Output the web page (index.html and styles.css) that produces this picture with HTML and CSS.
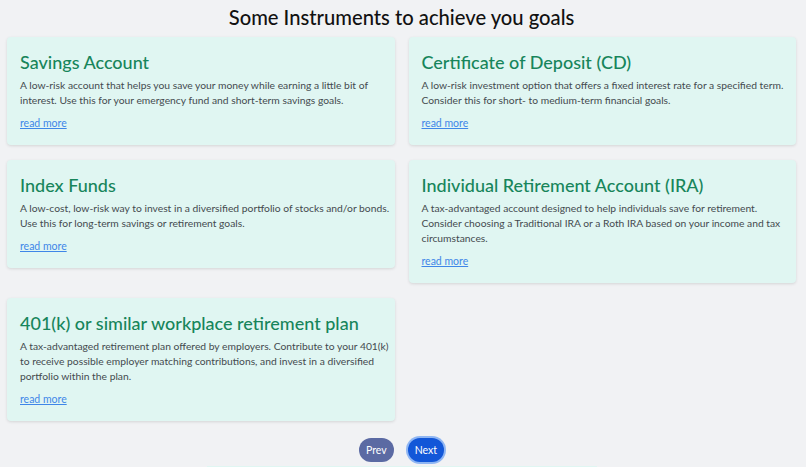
FILE: index.html
```html
<!DOCTYPE html>
<html>
<head>
<meta charset="utf-8">
<link rel="stylesheet" href="styles.css">
</head>
<body>
<main class="page">
  <h1 class="page-title">Some Instruments to achieve you goals</h1>
  <section class="grid">
    <article class="card">
      <h2 class="card-title">Savings Account</h2>
      <p class="card-text">A low-risk account that helps you save your money while earning a little bit of<br>interest. Use this for your emergency fund and short-term savings goals.</p>
      <a class="card-link" href="#">read more</a>
    </article>
    <article class="card">
      <h2 class="card-title">Certificate of Deposit (CD)</h2>
      <p class="card-text">A low-risk investment option that offers a fixed interest rate for a specified term.<br>Consider this for short- to medium-term financial goals.</p>
      <a class="card-link" href="#">read more</a>
    </article>
    <article class="card">
      <h2 class="card-title">Index Funds</h2>
      <p class="card-text">A low-cost, low-risk way to invest in a diversified portfolio of stocks and/or bonds.<br>Use this for long-term savings or retirement goals.</p>
      <a class="card-link" href="#">read more</a>
    </article>
    <article class="card">
      <h2 class="card-title">Individual Retirement Account (IRA)</h2>
      <p class="card-text">A tax-advantaged account designed to help individuals save for retirement.<br>Consider choosing a Traditional IRA or a Roth IRA based on your income and tax<br>circumstances.</p>
      <a class="card-link" href="#">read more</a>
    </article>
    <article class="card">
      <h2 class="card-title">401(k) or similar workplace retirement plan</h2>
      <p class="card-text">A tax-advantaged retirement plan offered by employers. Contribute to your 401(k)<br>to receive possible employer matching contributions, and invest in a diversified<br>portfolio within the plan.</p>
      <a class="card-link" href="#">read more</a>
    </article>
  </section>
  <nav class="pager">
    <button class="btn btn-prev">Prev</button>
    <button class="btn btn-next">Next</button>
  </nav>
  <div class="next-section"></div>
</main>
</body>
</html>
```
FILE: styles.css
```css
* { box-sizing: border-box; }
html, body { margin: 0; padding: 0; }
body {
  background: #f1f2f4;
  font-family: Lato, "Noto Sans", sans-serif;
  color: #444a4f;
  overflow: hidden;
}
.page {
  padding: 4px 10px 0 7px;
}
.page-title {
  margin: 0 0 7px;
  text-align: center;
  font-size: 20.2px;
  font-weight: 500;
  line-height: 26px;
  color: #111;
}
.grid {
  display: grid;
  grid-template-columns: 1fr 1fr;
  column-gap: 14px;
  row-gap: 15px;
  align-items: start;
}
.card {
  background: #e0f6f2;
  border-radius: 4px;
  box-shadow: 0 1px 3px rgba(0,0,0,0.12);
  padding: 12px 4px 14px 13px;
}
.card-title {
  margin: 0 0 3px;
  font-size: 18px;
  font-weight: 500;
  line-height: 26px;
  color: #17855b;
}
.card-text {
  margin: 0 0 3px;
  font-size: 10.3px;
  line-height: 15px;
  white-space: nowrap;
}
.card-link {
  font-size: 10.5px;
  line-height: 15px;
  color: #3f86e8;
  text-decoration: underline;
}
.pager {
  display: flex;
  justify-content: center;
  gap: 14px;
  margin-top: 17px;
}
.btn {
  border: none;
  border-radius: 999px;
  height: 24px;
  padding: 0 7px;
  font-family: Lato, sans-serif;
  font-size: 10.5px;
  color: #fff;
}
.btn-prev { background: #5b6aa3; }
.btn-next {
  background: #1257d8;
  box-shadow: 0 0 0 2px #8fb6f3;
}
.next-section {
  width: 390px;
  height: 20px;
  margin: 4px auto 0;
  background: #e0f6f2;
}
```
